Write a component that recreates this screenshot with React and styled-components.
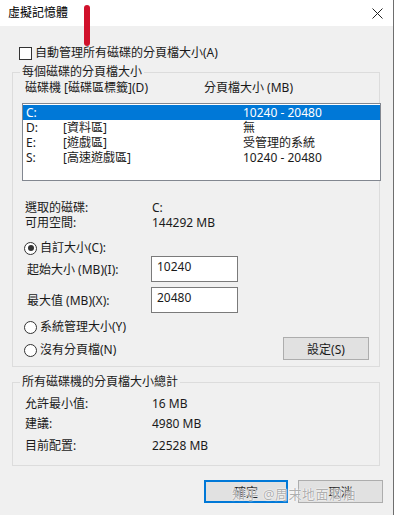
import React from "react";
import styled, { createGlobalStyle } from "styled-components";

const GlobalStyle = createGlobalStyle`
  html, body {
    margin: 0;
    padding: 0;
    background: #f0f0f0;
  }
  body {
    font-family: "Noto Sans", "Noto Sans CJK TC", sans-serif;
    font-size: 12px;
    color: #1a1a1a;
  }
`;

const StWindow = styled.div`
  position: relative;
  width: 393px;
  height: 515px;
  background: #f0f0f0;
  border-right: 1px solid #6e6e6e;
  overflow: hidden;
`;

const StTitleBar = styled.div`
  display: flex;
  justify-content: space-between;
  align-items: center;
  height: 26px;
  padding: 0 10px 0 8px;
  background: #ffffff;
`;

const StTitle = styled.span`
  font-size: 12px;
  line-height: 16px;
  margin-top: -1px;
  color: #000;
`;

const StBody = styled.div`
  padding: 0 13px 0 12px;
`;

const StCheckRow = styled.label`
  display: flex;
  align-items: center;
  gap: 3px;
  height: 16px;
  margin: 19px 0 0 7px;
  line-height: 16px;
`;

const StCheckBox = styled.span`
  width: 11px;
  height: 11px;
  border: 1px solid #333;
  background: #fff;
`;

const StGroup = styled.fieldset`
  margin: ${(p) => p.$top}px 0 0 0;
  padding: 0 0 ${(p) => p.$bottom}px 9px;
  border: 1px solid #dcdcdc;
  min-width: 0;
`;

const StLegend = styled.legend`
  padding: 0 2px;
  margin-left: -2px;
  line-height: 16px;
  color: #1a1a1a;
`;

const StColHeader = styled.div`
  display: grid;
  grid-template-columns: 179px 1fr;
  height: 16px;
  line-height: 16px;
  padding-left: 3px;
`;

const StListBox = styled.div`
  margin: 7px -2px 0 0;
  height: 75px;
  padding-top: 1px;
  background: #fff;
  border: 1px solid #828790;
  box-sizing: content-box;
`;

const StListRow = styled.div`
  display: grid;
  grid-template-columns: 37px 180px 1fr;
  height: 15px;
  line-height: 15px;
  padding-left: 3px;
  background: ${(p) => (p.$selected ? "#0078d7" : "transparent")};
  color: ${(p) => (p.$selected ? "#fff" : "#1a1a1a")};
`;

const StInfoRow = styled.div`
  display: grid;
  grid-template-columns: 127px 1fr;
  height: 15px;
  line-height: 15px;
  padding-left: 3px;
  margin-top: ${(p) => p.$top || 0}px;
`;

const StRadioRow = styled.label`
  display: flex;
  align-items: center;
  gap: 3px;
  height: 16px;
  line-height: 16px;
  margin: ${(p) => p.$top || 0}px 0 0 2px;
`;

const StRadio = styled.span`
  position: relative;
  width: 11px;
  height: 11px;
  border: 1px solid #333;
  border-radius: 50%;
  background: #fff;

  &::after {
    content: "";
    display: ${(p) => (p.$checked ? "block" : "none")};
    position: absolute;
    left: 2.5px;
    top: 2.5px;
    width: 6px;
    height: 6px;
    border-radius: 50%;
    background: #333;
  }
`;

const StFieldRow = styled.div`
  display: grid;
  grid-template-columns: 129px 87px;
  align-items: center;
  margin-top: ${(p) => p.$top || 0}px;
`;

const StFieldLabel = styled.span`
  padding-left: 5px;
  line-height: 15px;
`;

const StInput = styled.div`
  padding: 2px 5px 0 5px;
  box-sizing: border-box;
  height: 26px;
  line-height: 16px;
  background: #fff;
  border: 1px solid #7a7a7a;
  color: #1a1a1a;
`;

const StOptionArea = styled.div`
  display: flex;
  justify-content: space-between;
  align-items: flex-end;
  padding-right: 10px;
`;

const StOptions = styled.div`
  display: flex;
  flex-direction: column;
`;

const StButton = styled.div`
  display: flex;
  justify-content: center;
  align-items: center;
  width: ${(p) => p.$width}px;
  height: 23px;
  box-sizing: border-box;
  background: #e1e1e1;
  border: ${(p) => (p.$default ? "2px solid #0078d7" : "1px solid #adadad")};
  margin-bottom: ${(p) => p.$bottom || 0}px;
  color: #1a1a1a;
`;

const StButtonRow = styled.div`
  display: flex;
  justify-content: flex-end;
  gap: 10px;
  margin: 14px -3px 0 0;
`;

const StRedMark = styled.div`
  position: absolute;
  left: 84px;
  top: 5px;
  width: 6px;
  height: 41px;
  border-radius: 3px;
  background: #d0112b;
`;

const StWatermark = styled.div`
  position: absolute;
  left: 232px;
  top: 486px;
  font-size: 13px;
  line-height: 16px;
  color: rgba(150, 150, 150, 0.75);
  text-shadow: 0 0 2px #fff, 0 0 1px #fff;
  letter-spacing: 0.5px;
`;

const drives = [
  { id: "C:", label: "", size: "10240 - 20480", selected: true },
  { id: "D:", label: "[資料區]", size: "無" },
  { id: "E:", label: "[遊戲區]", size: "受管理的系統" },
  { id: "S:", label: "[高速遊戲區]", size: "10240 - 20480" },
];

const CloseIcon = () => (
  <svg width="11" height="11" viewBox="0 0 11 11">
    <path d="M0.5 0.5 L10.5 10.5 M10.5 0.5 L0.5 10.5" stroke="#222" strokeWidth="1" fill="none" />
  </svg>
);

const App = () => {
  return (
    <>
      <GlobalStyle />
      <StWindow>
        <StTitleBar>
          <StTitle>虛擬記憶體</StTitle>
          <CloseIcon />
        </StTitleBar>
        <StBody>
          <StCheckRow>
            <StCheckBox />
            自動管理所有磁碟的分頁檔大小(A)
          </StCheckRow>

          <StGroup $top={3} $bottom={8}>
            <StLegend>每個磁碟的分頁檔大小</StLegend>
            <StColHeader>
              <span>磁碟機 [磁碟區標籤](D)</span>
              <span>分頁檔大小 (MB)</span>
            </StColHeader>
            <StListBox>
              {drives.map((d) => (
                <StListRow key={d.id} $selected={d.selected}>
                  <span>{d.id}</span>
                  <span>{d.label}</span>
                  <span>{d.size}</span>
                </StListRow>
              ))}
            </StListBox>

            <StInfoRow $top={19}>
              <span>選取的磁碟:</span>
              <span>C:</span>
            </StInfoRow>
            <StInfoRow>
              <span>可用空間:</span>
              <span>144292 MB</span>
            </StInfoRow>

            <StRadioRow $top={10}>
              <StRadio $checked />
              自訂大小(C):
            </StRadioRow>
            <StFieldRow>
              <StFieldLabel>起始大小 (MB)(I):</StFieldLabel>
              <StInput>10240</StInput>
            </StFieldRow>
            <StFieldRow $top={5}>
              <StFieldLabel>最大值 (MB)(X):</StFieldLabel>
              <StInput>20480</StInput>
            </StFieldRow>

            <StOptionArea>
              <StOptions>
                <StRadioRow $top={6}>
                  <StRadio />
                  系統管理大小(Y)
                </StRadioRow>
                <StRadioRow $top={7}>
                  <StRadio />
                  沒有分頁檔(N)
                </StRadioRow>
              </StOptions>
              <StButton $width={86} $bottom={-2}>設定(S)</StButton>
            </StOptionArea>
          </StGroup>

          <StGroup $top={7} $bottom={12}>
            <StLegend>所有磁碟機的分頁檔大小總計</StLegend>
            <StInfoRow $top={6}>
              <span>允許最小值:</span>
              <span>16 MB</span>
            </StInfoRow>
            <StInfoRow $top={5}>
              <span>建議:</span>
              <span>4980 MB</span>
            </StInfoRow>
            <StInfoRow $top={7}>
              <span>目前配置:</span>
              <span>22528 MB</span>
            </StInfoRow>
          </StGroup>

          <StButtonRow>
            <StButton $width={84} $default>確定</StButton>
            <StButton $width={85}>取消</StButton>
          </StButtonRow>
        </StBody>
        <StRedMark />
        <StWatermark>知乎 @周末地面润油</StWatermark>
      </StWindow>
    </>
  );
};

export default App;
